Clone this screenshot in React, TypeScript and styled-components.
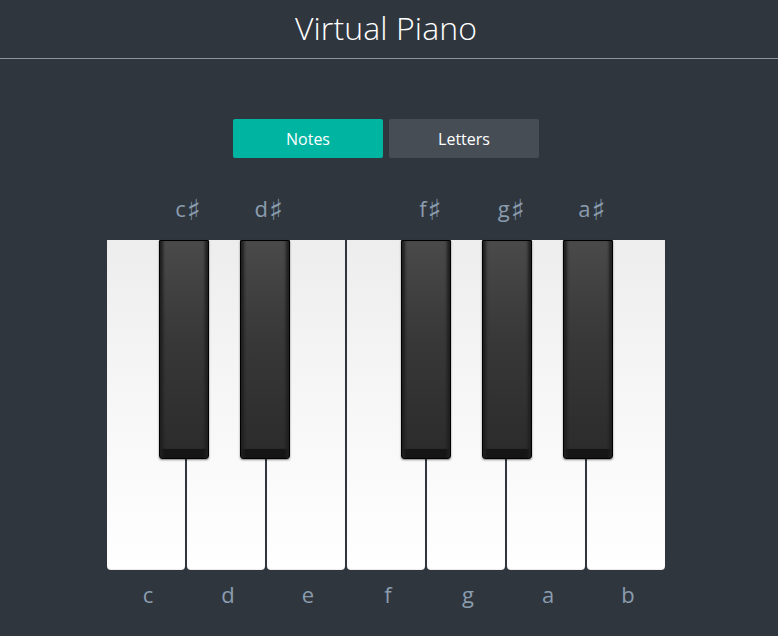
import React from "react";
import styled, { createGlobalStyle } from "styled-components";

const GlobalStyle = createGlobalStyle`
  html, body {
    margin: 0;
    padding: 0;
    background: #2f363e;
    font-family: "Open Sans", "Noto Sans", "DejaVu Sans", sans-serif;
  }
  * { box-sizing: border-box; }
`;

const Page = styled.div`
  width: 100%;
  min-height: 636px;
  padding-right: 6px;
  background: #2f363e;
  display: flex;
  flex-direction: column;
  align-items: stretch;
`;

const Header = styled.header`
  height: 59px;
  border-bottom: 1px solid #8d949b;
  display: flex;
  justify-content: center;
  margin-right: -6px;
  padding-right: 6px;
`;

const Title = styled.h1`
  margin: 0;
  font-size: 32px;
  font-weight: 300;
  line-height: 56px;
  color: #ffffff;
  letter-spacing: 0.1px;
`;

const Tabs = styled.div`
  display: flex;
  justify-content: center;
  gap: 6px;
  margin-top: 60px;
`;

const Tab = styled.button<{ $active?: boolean }>`
  width: 150px;
  height: 39px;
  border: none;
  border-radius: 2px;
  padding: 0;
  font-family: inherit;
  font-size: 16px;
  color: #ffffff;
  background: ${(p) => (p.$active ? "#00b4a2" : "#474d55")};
  cursor: pointer;
`;

const PianoWrap = styled.div`
  display: flex;
  justify-content: center;
  margin-top: 82px;
`;

const Keyboard = styled.div`
  position: relative;
  display: flex;
  gap: 2px;
`;

const KeyColumn = styled.div`
  display: flex;
  flex-direction: column;
  align-items: center;
  gap: 13px;
`;

const WhiteKey = styled.div`
  width: 78px;
  height: 330px;
  border-radius: 0 0 4px 4px;
  background: linear-gradient(to bottom, #ededed 0%, #f6f6f6 45%, #ffffff 100%);
  box-shadow: inset 0 -1px 1px rgba(0, 0, 0, 0.08);
`;

const NoteLabel = styled.span`
  font-size: 22px;
  line-height: 22px;
  color: #8a9cae;
  padding-left: 4px;
`;

const BlackKey = styled.div`
  position: absolute;
  top: 0;
  width: 50px;
  height: 219px;
  border: 1px solid #000;
  border-radius: 0 0 3px 3px;
  background: linear-gradient(to bottom, #4a4a4a 0%, #383838 45%, #2b2b2b 100%);
  box-shadow:
    inset 5px 0 3px -2px #202020,
    inset -5px 0 3px -2px #202020,
    inset 0 -11px 1px -2px #151515,
    0 1px 2px rgba(0, 0, 0, 0.5);
`;

const SharpLabel = styled.span`
  position: absolute;
  top: -44px;
  left: 50%;
  transform: translateX(calc(-50% + 4px));
  font-size: 22px;
  line-height: 22px;
  color: #8a9cae;
  white-space: nowrap;
`;

const SharpSign = styled.span`
  font-family: "DejaVu Sans", sans-serif;
  font-size: 29px;
  line-height: 22px;
  margin-left: 1px;
  vertical-align: -3px;
`;

const whites = ["c", "d", "e", "f", "g", "a", "b"];
const blacks = [
  { name: "c", slot: 0 },
  { name: "d", slot: 1 },
  { name: "f", slot: 3 },
  { name: "g", slot: 4 },
  { name: "a", slot: 5 },
];

export default function App() {
  return (
    <>
      <GlobalStyle />
      <Page>
        <Header>
          <Title>Virtual Piano</Title>
        </Header>
        <Tabs>
          <Tab $active>Notes</Tab>
          <Tab>Letters</Tab>
        </Tabs>
        <PianoWrap>
          <Keyboard>
            {whites.map((w) => (
              <KeyColumn key={w}>
                <WhiteKey />
                <NoteLabel>{w}</NoteLabel>
              </KeyColumn>
            ))}
            {blacks.map((b) => (
              <BlackKey key={b.name} style={{ left: 52 + b.slot * 80.8 }}>
                <SharpLabel>
                  {b.name}
                  <SharpSign>♯</SharpSign>
                </SharpLabel>
              </BlackKey>
            ))}
          </Keyboard>
        </PianoWrap>
      </Page>
    </>
  );
}
